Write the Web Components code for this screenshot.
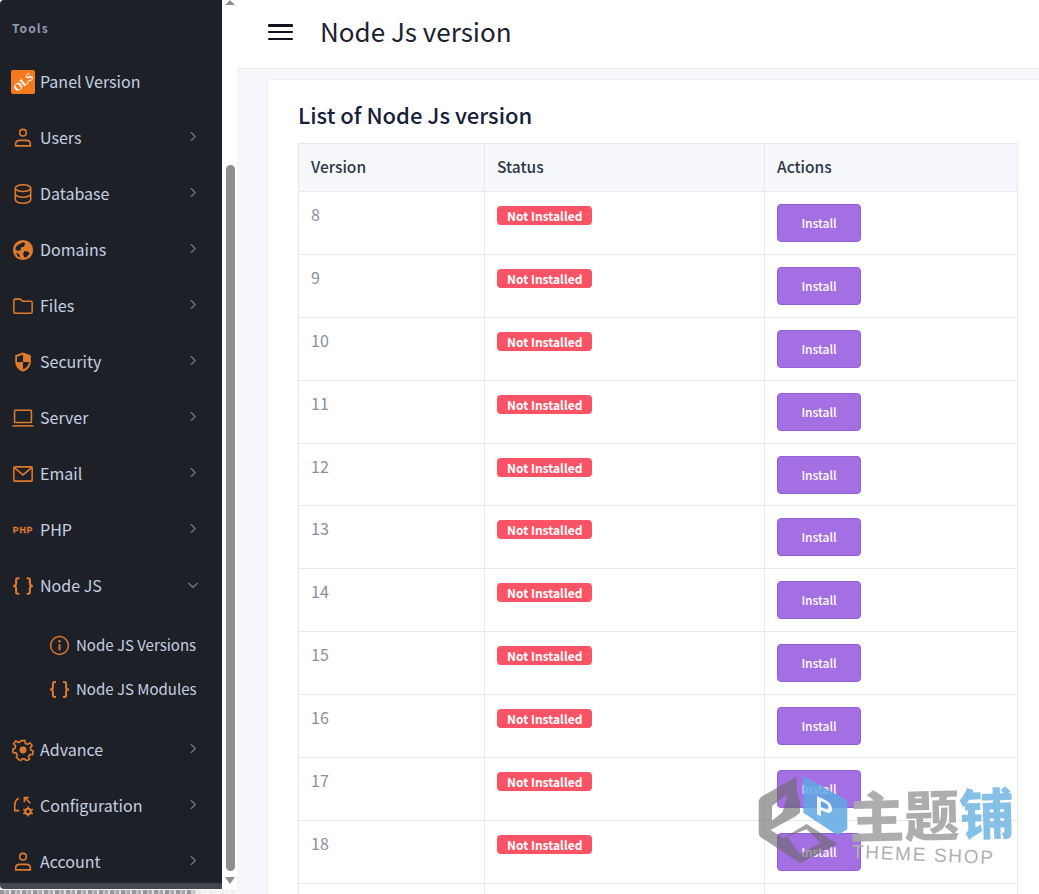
<!doctype html>
<html lang="en">
<head>
<meta charset="utf-8">
<title>Node Js version</title>
<style>
  html, body { margin: 0; height: 894px; overflow: hidden; background: #fff; }
  body { font-family: "Noto Sans CJK SC", "Noto Sans", sans-serif; }
</style>
</head>
<body>
<app-shell>
  <side-nav slot="side">
    <nav-label>Tools</nav-label>
    <nav-item icon="ols">Panel Version</nav-item>
    <nav-item icon="user" arrow="right">Users</nav-item>
    <nav-item icon="db" arrow="right">Database</nav-item>
    <nav-item icon="globe" arrow="right">Domains</nav-item>
    <nav-item icon="folder" arrow="right">Files</nav-item>
    <nav-item icon="shield" arrow="right">Security</nav-item>
    <nav-item icon="laptop" arrow="right">Server</nav-item>
    <nav-item icon="mail" arrow="right">Email</nav-item>
    <nav-item icon="php" arrow="right">PHP</nav-item>
    <nav-item icon="braces" arrow="down">Node JS</nav-item>
    <nav-sub>
      <nav-item sub icon="info">Node JS Versions</nav-item>
      <nav-item sub icon="braces">Node JS Modules</nav-item>
    </nav-sub>
    <nav-item icon="gear" arrow="right">Advance</nav-item>
    <nav-item icon="config" arrow="right">Configuration</nav-item>
    <nav-item icon="user" arrow="right">Account</nav-item>
  </side-nav>
  <top-bar slot="main">Node Js version</top-bar>
  <list-card slot="main" heading="List of Node Js version">
    <version-table versions="8 9 10 11 12 13 14 15 16 17 18"></version-table>
  </list-card>
</app-shell>
<water-mark></water-mark>

<script>
// icons are all drawn on a 24 box, coloured by currentColor
const ICONS = {
  ols: `<rect x="0" y="0" width="24" height="24" rx="2" fill="#f47a20"/>
        <text x="12" y="16" transform="rotate(-40 12 12)" text-anchor="middle" font-family="Liberation Serif" font-weight="700" font-size="11" fill="#fff">OLS</text>`,
  user: `<g fill="none" stroke="currentColor" stroke-width="1.7"><circle cx="12" cy="6.2" r="3.600"/><path d="M4 20.600v-2.200c0-2.400 2.200-3.800 4.600-3.800h6.800c2.400 0 4.600 1.400 4.600 3.800v2.200z"/></g>`,
  db: `<g fill="none" stroke="currentColor" stroke-width="1.7"><ellipse cx="12" cy="5.6" rx="8.4" ry="3.6"/><path d="M3.6 5.6v12.800c0 2 3.800 3.600 8.400 3.600s8.400-1.600 8.400-3.600V5.600M3.600 12c0 2 3.800 3.600 8.400 3.600s8.400-1.600 8.400-3.600"/></g>`,
  globe: `<circle cx="12" cy="12" r="11" fill="currentColor"/><path fill="#1e2028" d="M7.500 6l4.500-2.500 2.500 1.500-1.500 3.500-3 .5-.5 3-3.500 1.200-2.500-2.200 1.500-3.500zM13.500 13l4.500 1 1 2-3 3.500-2.500.8-1.500-3.800zM4.500 14.500l3.500 2.500 1 3.500-3-2z"/>`,
  folder: `<path fill="none" stroke="currentColor" stroke-width="1.7" d="M2 6.200c0-1 .7-1.700 1.700-1.700h5.500l2.300 2.300h8.800c1 0 1.700.7 1.700 1.700v9.800c0 1-.7 1.700-1.700 1.700H3.700c-1 0-1.700-.7-1.700-1.700z"/>`,
  shield: `<path fill="currentColor" d="M12 1.500l8.500 3v7c0 5.500-3.500 9.500-8.500 11-5-1.500-8.500-5.500-8.500-11v-7z"/><path fill="#1e2028" d="M12 4v8H5.500V6.300zM12 12h6.500c-.3 3.700-2.800 6.700-6.500 8z"/>`,
  laptop: `<g fill="none" stroke="currentColor" stroke-width="1.700"><rect x="2.800" y="3.500" width="18.400" height="13.500" rx=".8"/><path d="M.6 20.600h22.800"/></g>`,
  mail: `<g fill="none" stroke="currentColor" stroke-width="1.700"><rect x="2" y="4.200" width="20" height="15.600" rx="1"/><path d="M2.500 5l9.500 8 9.500-8"/></g>`,
  php: `<text x="12" y="15.500" text-anchor="middle" font-family="Liberation Sans" font-weight="700" font-size="9.500" letter-spacing=".9" stroke="currentColor" stroke-width=".3" fill="currentColor">PHP</text>`,
  braces: `<path fill="none" stroke="currentColor" stroke-width="2.300" d="M8 3.500H6.300C5 3.500 4.500 4.200 4.500 5.400v3.900C4.500 11 3 12 1.200 12 3 12 4.500 13 4.500 14.700v3.900c0 1.200.5 1.900 1.800 1.900H8M16 3.500h1.700c1.300 0 1.800.7 1.800 1.900v3.900c0 1.700 1.500 2.700 3.300 2.700-1.800 0-3.300 1-3.300 2.700v3.900c0 1.200-.5 1.900-1.800 1.900H16"/>`,
  info: `<g fill="none" stroke="currentColor" stroke-width="1.700"><circle cx="12" cy="12" r="10.200"/><path stroke-width="2.200" d="M12 10.500v7"/></g><circle cx="12" cy="7.200" r="1.400" fill="currentColor"/>`,
  gear: `<g fill="none" stroke="currentColor" stroke-width="1.800"><path d="M10 1.800h4l.6 3 2.300 1 2.600-1.700 2.500 3-2 2.300.4 2.600 2.700 1.200-.7 3.800-3 .1-1.400 2 1 2.900-3.400 1.900-2-2.300h-2.400l-2 2.300L4.800 20l1-2.900-1.400-2-3-.1-.7-3.800 2.700-1.200.4-2.600-2-2.300 2.500-3 2.600 1.700 2.300-1z"/></g><circle cx="12" cy="12" r="3.800" fill="currentColor"/>`,
  config: `<g fill="none" stroke="currentColor" stroke-width="1.800"><path d="M7.500 3.500C4.500 5 2.500 8 3.200 12.500M3 8.500v8.500h5"/><path d="M13.500 8V2.800h5M14 3l6 6"/></g><circle cx="17.500" cy="18" r="3" fill="none" stroke="currentColor" stroke-width="2.400"/><path stroke="currentColor" stroke-width="1.800" d="M17.500 12.500v2M17.500 21.500v2M12.300 15.500l1.800 1M20.900 19.500l1.800 1M12.300 20.500l1.800-1M20.900 16.500l1.800-1"/>`
};

class AppShell extends HTMLElement {
  constructor() {
    super();
    this.attachShadow({ mode: "open" }).innerHTML = `
      <style>
        :host { display: grid; grid-template-columns: 222px 15px 1fr; grid-template-rows: 889px 5px; height: 894px; overflow: hidden; }
        .side { overflow: hidden; background: linear-gradient(#1e2028 882px, #44484f 884px); border-radius: 4px 0 0 4px; }
        .track { display: flex; flex-direction: column; align-items: center; background: #fff; padding-left: 1px; box-sizing: border-box; }
        .up { flex: none; width: 0; height: 0; border: 5px solid transparent; border-top: 0; border-bottom-color: #8f8f8f; }
        .gap { flex: none; height: 160px; }
        .thumb { flex: none; width: 9px; height: 706px; background: #8f8f8f; border-radius: 5px; }
        .down { flex: none; margin-top: 6px; width: 0; height: 0; border: 5px solid transparent; border-bottom: 0; border-top-width: 7px; border-top-color: #8f8f8f; }
        .main { grid-column: 3; grid-row: 1 / 3; min-width: 0; overflow: hidden; background: #f5f7fb; }
        /* the cut off line under the sidebar */
        .under { grid-column: 1 / 3; background: linear-gradient(#fff 1px, transparent 1px) , repeating-linear-gradient(90deg, #94969a 0 4px, #c4c5c8 4px 6px, #a5a7aa 6px 9px, #dedfe0 9px 11px); -webkit-mask-image: linear-gradient(90deg, #000 190px, rgba(0,0,0,.15) 200px); mask-image: linear-gradient(90deg, #000 190px, rgba(0,0,0,.15) 200px); }
      </style>
      <div class="side"><slot name="side"></slot></div>
      <div class="track"><i class="up"></i><i class="gap"></i><i class="thumb"></i><i class="down"></i></div>
      <div class="main"><slot name="main"></slot></div>
      <div class="under"></div>`;
  }
}

class SideNav extends HTMLElement {
  constructor() {
    super();
    this.attachShadow({ mode: "open" }).innerHTML = `
      <style>
        :host { display: block; color: #c5d0e0; }
      </style>
      <slot></slot>`;
  }
}

class NavLabel extends HTMLElement {
  constructor() {
    super();
    this.attachShadow({ mode: "open" }).innerHTML = `
      <style>
        :host { display: block; height: 54px; box-sizing: border-box; padding: 18px 0 0 12px; font-size: 12px; line-height: 20px; font-weight: 700; letter-spacing: 1.1px; color: #8f9bb3; }
      </style>
      <slot></slot>`;
  }
}

class NavSub extends HTMLElement {
  constructor() {
    super();
    this.attachShadow({ mode: "open" }).innerHTML = `
      <style>
        :host { display: block; padding: 9px 0 11px; }
      </style>
      <slot></slot>`;
  }
}

const ARROWS = { right: "M1 1l5 5-5 5", down: "M1 1l5.500 5L12 1" };

class NavItem extends HTMLElement {
  constructor() {
    super();
    const name = this.getAttribute("icon");
    const arrow = this.getAttribute("arrow");
    const arrowSvg = arrow
      ? `<svg class="arrow ${arrow}" viewBox="0 0 ${arrow === "down" ? "13 8" : "8 12"}"><path d="${ARROWS[arrow]}"/></svg>`
      : "";
    this.attachShadow({ mode: "open" }).innerHTML = `
      <style>
        :host { display: flex; align-items: center; height: 56px; padding-left: 12px; font-size: 16px; line-height: 24px; color: #c5d0e0; }
        :host([sub]) { height: 44px; padding-left: 49px; font-size: 15px; }
        svg.icon { flex: none; width: 22px; height: 22px; margin-right: 6px; color: #dd7a2e; }
        :host([sub]) svg.icon { width: 21px; height: 21px; margin-right: 6px; }
        :host([icon="ols"]) svg.icon { width: 24px; height: 24px; margin-left: -1px; margin-right: 5px; }
        .text { flex: 1; white-space: nowrap; margin-bottom: 2px; }
        :host([sub]) .text { margin-bottom: 0; }
        svg.arrow { flex: none; fill: none; stroke: #747a85; stroke-width: 1.500; margin-bottom: 4px; }
        svg.right { width: 7px; height: 11px; margin-right: 25px; }
        svg.down { width: 12px; height: 7px; margin-right: 23px; margin-bottom: 2px; }
      </style>
      <svg class="icon" viewBox="0 0 24 24">${ICONS[name] || ""}</svg>
      <span class="text"><slot></slot></span>
      ${arrowSvg}`;
  }
}

class TopBar extends HTMLElement {
  constructor() {
    super();
    this.attachShadow({ mode: "open" }).innerHTML = `
      <style>
        :host { display: flex; align-items: center; height: 69px; box-sizing: border-box; padding: 0 0 4px 31px; background: #fff; border-bottom: 1px solid #e9ecf2; font-size: 26px; color: #1b2132; }
        .burger { flex: none; width: 25px; height: 16px; margin-right: 27px; display: flex; flex-direction: column; justify-content: space-between; }
        .burger i { display: block; height: 2.500px; border-radius: 1px; background: #10131f; }
        .title { margin-bottom: 4px; }
      </style>
      <div class="burger"><i></i><i></i><i></i></div>
      <span class="title"><slot></slot></span>`;
  }
}

class ListCard extends HTMLElement {
  constructor() {
    super();
    this.attachShadow({ mode: "open" }).innerHTML = `
      <style>
        :host { display: block; margin: 10px -8px 0 30px; box-sizing: border-box; height: 900px; padding: 17px 29px 0 30px; background: #fff; border: 1px solid #ebeef4; border-radius: 4px; }
        h2 { margin: 0 0 12px; font-size: 22px; line-height: 34px; font-weight: 500; color: #17203a; }
      </style>
      <h2>${this.getAttribute("heading")}</h2>
      <slot></slot>`;
  }
}

class StatusBadge extends HTMLElement {
  constructor() {
    super();
    this.attachShadow({ mode: "open" }).innerHTML = `
      <style>
        :host { display: inline-block; height: 19px; padding: 0 10px; border-radius: 4px; background: #fb5366; color: #fff; font-size: 12px; line-height: 19px; font-weight: 700; white-space: nowrap; }
      </style>
      <slot></slot>`;
  }
}

class InstallButton extends HTMLElement {
  constructor() {
    super();
    this.attachShadow({ mode: "open" }).innerHTML = `
      <style>
        :host { display: flex; align-items: center; justify-content: center; width: 84px; height: 38px; box-sizing: border-box; border: 1px solid #9060d6; border-radius: 4px; background: #a56fe4; color: #fff; font-size: 12px; line-height: 20px; font-weight: 500; }
      </style>
      <slot></slot>`;
  }
}

class VersionRow extends HTMLElement {
  constructor() {
    super();
    const version = this.getAttribute("version");
    this.attachShadow({ mode: "open" }).innerHTML = `
      <style>
        :host { display: grid; grid-template-columns: 186px 280px 254px; height: 62.900px; box-sizing: border-box; border-bottom: 1px solid #e6e9ef; }
        div { box-sizing: border-box; border-left: 1px solid #e6e9ef; }
        .version { padding: 10px 0 0 12px; font-size: 16px; line-height: 24px; color: #87919f; }
        .status { padding: 14px 0 0 12px; line-height: 0; }
        .action { padding: 12px 0 0 12px; border-right: 1px solid #e6e9ef; }
      </style>
      <div class="version">${version || ""}</div>
      <div class="status">${version ? "<status-badge>Not Installed</status-badge>" : ""}</div>
      <div class="action">${version ? "<install-button>Install</install-button>" : ""}</div>`;
  }
}

class VersionTable extends HTMLElement {
  constructor() {
    super();
    const rows = this.getAttribute("versions").split(" ")
      .map(v => `<version-row version="${v}"></version-row>`).join("");
    this.attachShadow({ mode: "open" }).innerHTML = `
      <style>
        :host { display: block; width: 720px; }
        .head { display: grid; grid-template-columns: 186px 280px 254px; height: 49px; box-sizing: border-box; background: #f6f8fb; border-top: 1px solid #e6e9ef; border-bottom: 1px solid #e6e9ef; }
        .head div { box-sizing: border-box; padding-left: 12px; border-left: 1px solid #e6e9ef; font-size: 15.500px; line-height: 45px; font-weight: 500; color: #2d3748; }
        .head div:last-child { border-right: 1px solid #e6e9ef; }
      </style>
      <div class="head"><div>Version</div><div>Status</div><div>Actions</div></div>
      ${rows}
      <version-row></version-row>`;
  }
}

// site watermark laid over the bottom right of the page
class WaterMark extends HTMLElement {
  constructor() {
    super();
    this.attachShadow({ mode: "open" }).innerHTML = `
      <style>
        :host { position: absolute; left: 750px; top: 770px; width: 280px; height: 110px; pointer-events: none; font-family: "Noto Sans CJK SC", sans-serif; }
        svg { position: absolute; left: 0; top: 0; width: 150px; height: 110px; }
        .cn { position: absolute; left: 99px; top: 12px; font-size: 55px; line-height: 60px; font-weight: 900; color: #a9a9a9; white-space: nowrap; opacity: .95; transform: rotate(-1.500deg); }
        .cn b { font-weight: 900; color: #80bde5; }
        .en { position: absolute; left: 102px; top: 74px; font-family: "Liberation Sans", sans-serif; font-size: 19px; line-height: 22px; letter-spacing: 1.700px; color: #b0b0b0; white-space: nowrap; transform: rotate(2.500deg); }
      </style>
      <svg viewBox="0 0 450 330">
        <path fill="#5ea9e2" opacity=".85" d="M160 18L285 88q7 4 7 14V178l-30 18L160 128z"/>
        <text x="196" y="132" transform="skewY(25) translate(0 -92)" font-family="Liberation Sans" font-weight="700" font-size="80" fill="#fff" opacity=".9">P</text>
        <path fill="#6a6a6a" fill-rule="evenodd" opacity=".62" d="M140 20L38 78Q26 85 26 98V188q0 10 10 16L150 280 262 222 170 162 100 204 62 180 135 140 150 128V100L140 60zM66 108L112 72 98 126 66 152zM112 200L170 178 212 218 150 252z"/>
      </svg>
      <div class="cn">主题<b>铺</b></div>
      <div class="en">THEME SHOP</div>`;
  }
}

customElements.define("app-shell", AppShell);
customElements.define("side-nav", SideNav);
customElements.define("nav-label", NavLabel);
customElements.define("nav-sub", NavSub);
customElements.define("nav-item", NavItem);
customElements.define("top-bar", TopBar);
customElements.define("list-card", ListCard);
customElements.define("status-badge", StatusBadge);
customElements.define("install-button", InstallButton);
customElements.define("version-row", VersionRow);
customElements.define("version-table", VersionTable);
customElements.define("water-mark", WaterMark);
</script>
</body>
</html>
